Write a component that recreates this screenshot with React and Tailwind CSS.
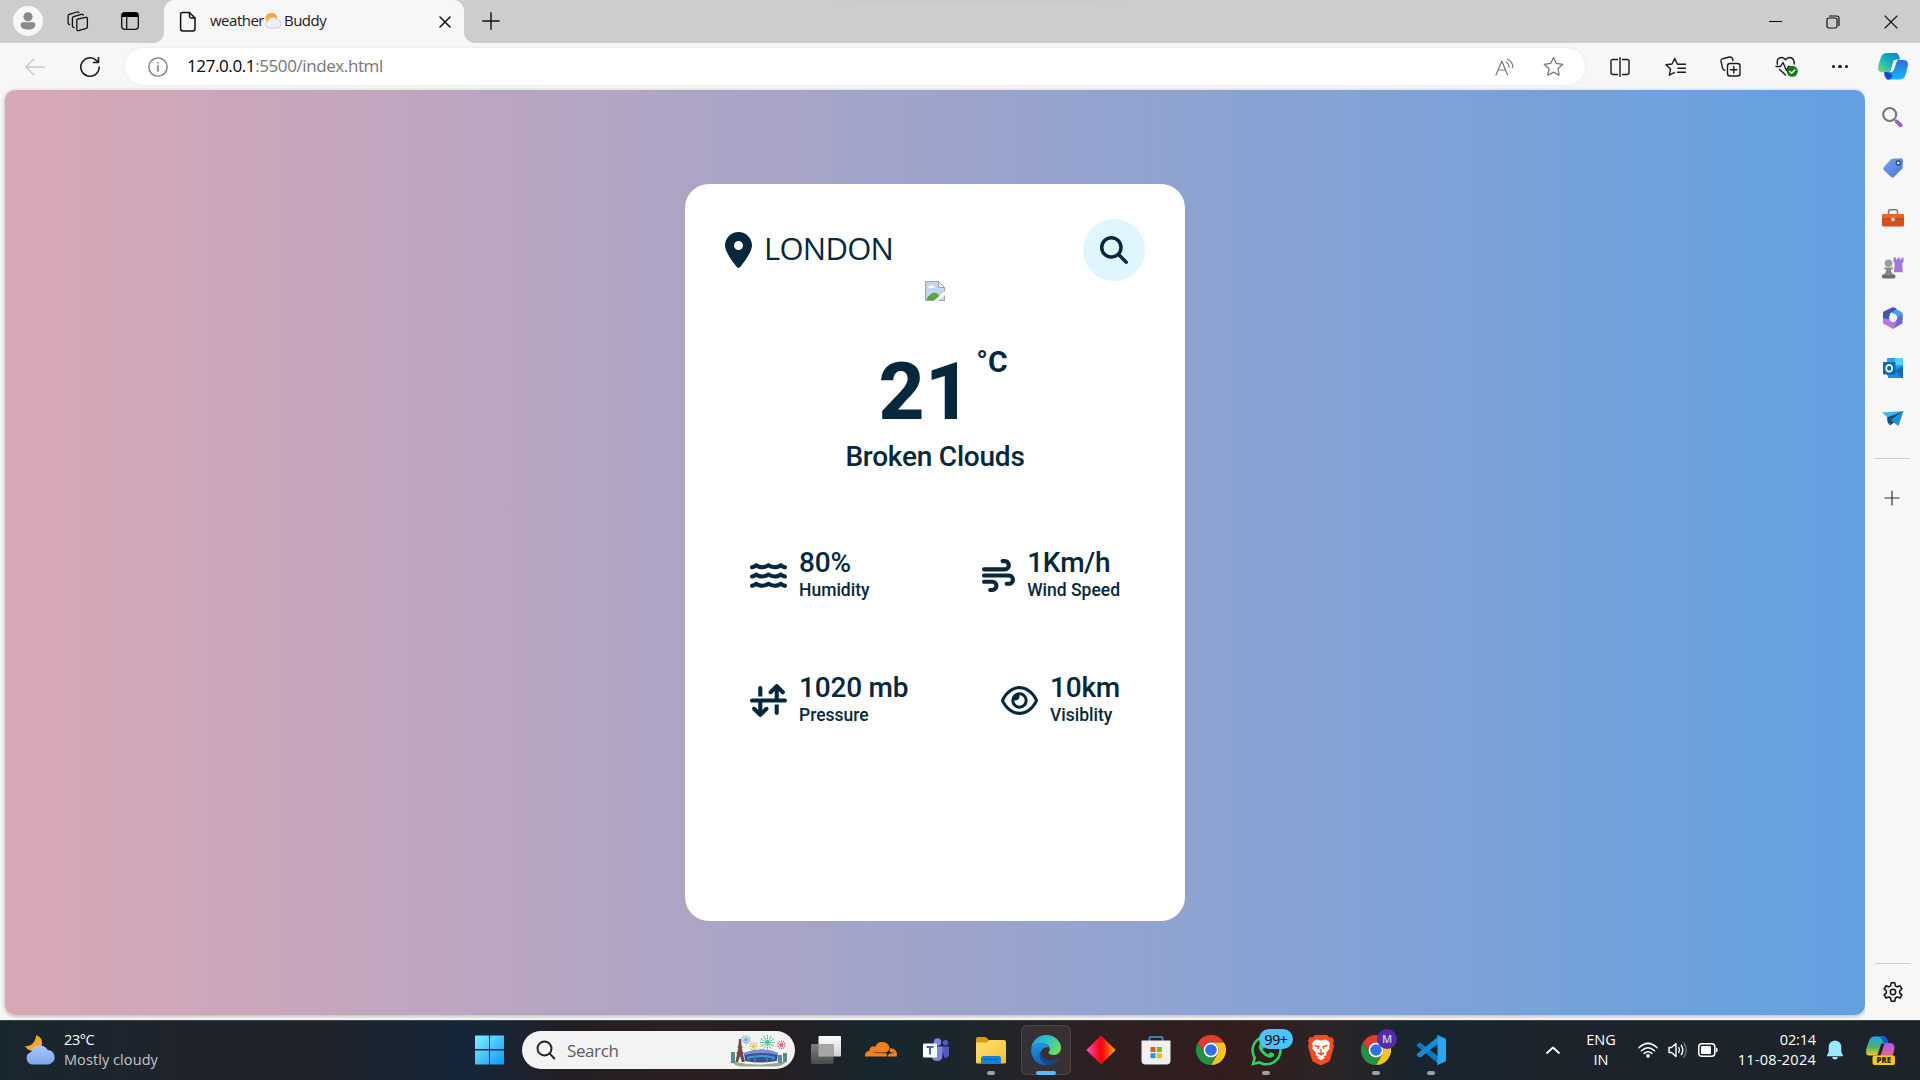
import React from "react";
import {
  FaLocationDot,
  FaMagnifyingGlass,
  FaWater,
  FaWind,
  FaArrowDownUpAcrossLine,
  FaRegEye,
  FaWhatsapp,
  FaCloudflare,
} from "react-icons/fa6";

const UI = "font-['Open_Sans','Noto_Sans',sans-serif]";

const stroke = { fill: "none", stroke: "currentColor", strokeLinecap: "round", strokeLinejoin: "round" };

/* ---------- Title bar ---------- */

function Profile() {
  return (
    <div className="h-[30px] w-[30px] rounded-full bg-[#f7f7f7]">
      <svg viewBox="0 0 30 30" className="h-[30px] w-[30px]" fill="#8a8a8a">
        <circle cx="15" cy="10.8" r="4.6" />
        <path d="M10 16.2h10a2.4 2.4 0 0 1 2.4 2.4c0 3.6-3.4 5.2-7.4 5.2s-7.4-1.600-7.400-5.200a2.400 2.400 0 0 1 2.400-2.400z" />
      </svg>
    </div>
  );
}

function Workspaces() {
  return (
    <svg viewBox="0 0 22 22" className="h-[22px] w-[22px]" {...stroke} strokeWidth="1.300">
      <path d="M10.500 9.200l8.200-1.900q1.700-.3 1.700 1.300v8.200q0 1.200-1.200 1.600l-7.600 2.200q-1.800.4-1.800-1.300v-8.500q0-1.300.7-1.600z" />
      <path d="M7 17.500q-1.600 0-1.600-1.500V8.200q0-1.200 1.200-1.600l7.800-2.300q1.500-.4 1.800.8" />
      <path d="M2.600 14.500q-1.500-.2-1.500-1.600V6q0-1.200 1.200-1.600L10 2q1.500-.5 1.900.6" />
    </svg>
  );
}

function TabActions() {
  return (
    <svg viewBox="0 0 20 20" className="h-5 w-5">
      <rect x="1.700" y="1.700" width="16.600" height="16.600" rx="2.800" fill="none" stroke="#111" strokeWidth="1.300" />
      <path d="M1.700 6V4.300q0-2.600 2.600-2.600h11.400q2.600 0 2.600 2.600V6z" fill="#000" />
      <path d="M6.700 6v12" stroke="#111" strokeWidth="1.300" />
    </svg>
  );
}

function PartlyCloudy() {
  return (
    <svg viewBox="0 0 17 17" className="ml-px h-[17px] w-[17px]">
      <circle cx="6.500" cy="6.800" r="5.800" fill="#fdb52f" />
      <path d="M.5 6l1-3.500L5 1 9 1l3 2.500.5 2.500-4-1.500z" fill="#f79a3a" opacity=".6" />
      <path d="M4 16a3.700 3.700 0 0 1-1-7.200A5.200 5.200 0 0 1 12.200 7.500a4.300 4.300 0 0 1 .4 8.500z" fill="#f1ecfa" stroke="#c9bfdb" strokeWidth=".8" />
    </svg>
  );
}

function TitleBar() {
  return (
    <header className="flex h-[43px] bg-[#cdcdcd] text-[#111]">
      <div className="flex w-[164px] items-center pb-px pl-[13px]">
        <Profile />
        <div className="ml-[24px]"><Workspaces /></div>
        <div className="ml-[31px]"><TabActions /></div>
      </div>
      <div className="relative flex w-[300px] items-center rounded-t-[11px] bg-[#f7f7f7] pl-[15px] pr-[12px]">
        <span className="absolute -left-[10px] bottom-0 h-[10px] w-[10px] bg-[radial-gradient(circle_at_0_0,#cdcdcd_9.500px,#f7f7f7_10px)]" />
        <span className="absolute -right-[10px] bottom-0 h-[10px] w-[10px] bg-[radial-gradient(circle_at_100%_0,#cdcdcd_9.500px,#f7f7f7_10px)]" />
        <svg viewBox="0 0 18 22" className="h-[22px] w-[18px]" {...stroke} strokeWidth="1.500">
          <path d="M3.500 1.500h7l5.500 5.500v10.800q0 2.200-2.200 2.200H3.800q-2.200 0-2.200-2.200V3.500q0-2 1.900-2z" />
          <path d="M10.500 1.800v3.500q0 1.700 1.700 1.700h3.600" />
        </svg>
        <div className={`${UI} ml-[13px] flex items-center pb-[2px] text-[15px] tracking-[-0.5px] text-[#1a1a1a]`}>
          <span>weather</span>
          <PartlyCloudy />
          <span className="ml-[2px]">Buddy</span>
        </div>
        <svg viewBox="0 0 12 12" className="ml-auto mr-px h-3 w-3" {...stroke} strokeWidth="1.500">
          <path d="M1 1l10 10M11 1L1 11" />
        </svg>
      </div>
      <svg viewBox="0 0 18 18" className="ml-[18px] mt-[12px] h-[18px] w-[18px]" {...stroke} strokeWidth="1.400">
        <path d="M9 .8v16.400M.8 9h16.400" />
      </svg>
      <div className="ml-[333px] h-[3px] w-[290px] rounded-[50%] bg-[#c7c7c7] blur-[1.500px]" />
      <div className="ml-auto flex items-center pr-[22px]">
        <div className="h-[1px] w-[13px] bg-black" />
        <svg viewBox="0 0 14 14" className="ml-[44px] h-[14px] w-[14px]" {...stroke} strokeWidth="1.200">
          <rect x="1" y="3" width="10" height="10" rx="1.800" />
          <path d="M3.500 1h7q2.500 0 2.500 2.500v7" />
        </svg>
        <svg viewBox="0 0 14 14" className="ml-[44px] h-[14px] w-[14px]" {...stroke} strokeWidth="1.100">
          <path d="M1 1l12 12M13 1L1 13" />
        </svg>
      </div>
    </header>
  );
}

/* ---------- Toolbar ---------- */

const STAR = "M10 1.500l2.700 5.600 6.100.8-4.500 4.300 1.100 6.100L10 15.400l-5.400 2.900 1.100-6.100L1.200 7.900l6.100-.8z";

function CopilotEdge() {
  return (
    <svg viewBox="0 0 30 27" className="h-[27px] w-[30px]">
      <defs>
        <linearGradient id="ceA" x1="0" y1="1" x2="1" y2="0">
          <stop offset="0" stopColor="#7be06c" />
          <stop offset=".45" stopColor="#1bb6b9" />
          <stop offset="1" stopColor="#0a7fd6" />
        </linearGradient>
        <linearGradient id="ceB" x1="0" y1="0" x2="0" y2="1">
          <stop offset="0" stopColor="#2b6fe6" />
          <stop offset="1" stopColor="#14b8f5" />
        </linearGradient>
      </defs>
      <path d="M9 26.500q-1.500-1-2.700-4L6 18h6l5-11h8q5 0 5 4 0 2.500-1.500 7L27.500 22q-1.600 4.500-6 4.500z" fill="url(#ceB)" />
      <path d="M6.300 19h5.500l2.800 4-2.600 3.500H9.500q-2.500-1.500-3.200-7.500z" fill="#174ad0" />
      <path d="M9 0h9.500q2.500.8 3.500 6.500h-3.500q-2 0-2.700 2L13 16.500q-.9 2.600-3.500 2.600H4Q0 19 0 15.500 0 13 1.500 8.500L3 4q1.500-4 6-4z" fill="url(#ceA)" />
      <path d="M15.500 7.500q1.500-.8 4.500-.5-1 .5-1.600 2.500l-2.200 6.500q-1 3-4 3.200H9.800q2.400 0 3.200-2.500z" fill="#fff" />
    </svg>
  );
}

function Toolbar() {
  return (
    <div className="flex h-[47px] items-center bg-[#f7f7f7] text-[#1b1b1b]">
      <svg viewBox="0 0 20 18" className="ml-[25px] h-[18px] w-5 text-[#c9c9c9]" {...stroke} strokeWidth="1.300">
        <path d="M9 1L1 9l8 8M1 9h18.500" />
      </svg>
      <svg viewBox="0 0 22 22" className="ml-[34px] h-[22px] w-[22px]" {...stroke} strokeWidth="1.600">
        <path d="M20.200 11A9.200 9.200 0 1 1 17.300 4.300L19.300 6.200" />
        <path d="M19.500 1.500v5h-5" />
      </svg>
      <div className="ml-[24px] flex h-[37px] w-[1460px] items-center rounded-full bg-white pl-[22px] pr-[21px] shadow-[0_0_4px_rgba(0,0,0,0.06)]">
        <svg viewBox="0 0 20 20" className="ml-px h-5 w-5 text-[#767676]" {...stroke} strokeWidth="1.300">
          <circle cx="10" cy="10" r="9.200" />
          <path d="M10 8.800v5.400M10 5.700v.4" strokeWidth="1.500" />
        </svg>
        <div className={`${UI} ml-[19px] pb-px text-[17px] tracking-[-0.4px] text-[#767676]`}>
          <span className="text-black">127.0.0.1</span>:5500/index.html
        </div>
        <svg viewBox="0 0 19 18" className="ml-auto h-[18px] w-[19px] text-[#767676]" {...stroke} strokeWidth="1.200">
          <path d="M1 17L6.800 3l5.800 14M3 12h7.600" />
          <path d="M11.500 4.200a6 6 0 0 1 2.700 4.800M12.500 1.200a9 9 0 0 1 5.300 8.300" />
        </svg>
        <svg viewBox="0 0 20 20" className="ml-[29px] h-[21px] w-[21px] text-[#767676]" {...stroke} strokeWidth="1.200">
          <path d={STAR} />
        </svg>
      </div>
      <svg viewBox="0 0 20 20" className="ml-[24.500px] h-5 w-5" {...stroke} strokeWidth="1.400">
        <path d="M7.500 2.500H3q-2 0-2 2v11q0 2 2 2h4.500M12.500 2.500H17q2 0 2 2v11q0 2-2 2h-4.500M10 .5v19" />
      </svg>
      <svg viewBox="0 0 21 20" className="ml-[35px] h-5 w-[21px]" {...stroke} strokeWidth="1.400">
        <path d="M12.500 7h-.2L9.800 1.500 7 7l-6 .8 4.500 4.300-1.200 6 5-2.500M12.500 7.200h8M13 11.200h7.500M12.500 15.200h8" />
      </svg>
      <svg viewBox="0 0 21 21" className="ml-[34px] h-[21px] w-[21px]" {...stroke} strokeWidth="1.400">
        <rect x="7.500" y="7.500" width="12.500" height="12.500" rx="2.500" />
        <path d="M13.800 10.500v6.500M10.500 13.800H17M4.800 14.200q-1.700-.2-2.200-2L1 5.400Q.6 3.400 2.600 2.800l7-1.800q2-.4 2.800 1.500l.6 2" />
      </svg>
      <svg viewBox="0 0 23 21" className="ml-[34px] h-[21px] w-[23px]" {...stroke} strokeWidth="1.400">
        <path d="M2.300 8.200Q1.500 2 6.300 1.500q2.700-.1 4.200 2.300 1.500-2.400 4.200-2.300 4.800.5 4.500 6.500M1 10.500h4.500L8 6.500l3.500 8 2-4h1.500M4.500 13.500l6 5.500" />
        <circle cx="17.300" cy="15.300" r="5.500" fill="#107c10" stroke="none" />
        <path d="M14.800 15.500l1.800 1.700 3.200-3.300" stroke="#fff" strokeWidth="1.500" />
      </svg>
      <div className="ml-[34px] flex gap-[3px]">
        <span className="h-[3.500px] w-[3.500px] rounded-full bg-[#111]" />
        <span className="h-[3.500px] w-[3.500px] rounded-full bg-[#111]" />
        <span className="h-[3.500px] w-[3.500px] rounded-full bg-[#111]" />
      </div>
      <div className="ml-[29.500px] pb-px"><CopilotEdge /></div>
    </div>
  );
}

/* ---------- Sidebar ---------- */

function Sidebar() {
  const cls = "h-[22px] w-[22px]";
  return (
    <aside className="flex w-[55px] flex-col items-center bg-[#f7f7f7]">
      <div className="mt-[16px] flex flex-col items-center gap-[28px]">
        <svg viewBox="0 0 22 22" className="mb-px mr-px h-[22px] w-[22px]">
          <circle cx="8.700" cy="8.500" r="6.500" fill="none" stroke="#767676" strokeWidth="2.100" />
          <path d="M14 14l1.500 1.500" stroke="#767676" strokeWidth="2" />
          <path d="M15.800 15.600l3.800 3.600" stroke="#9a62d0" strokeWidth="4" strokeLinecap="round" />
        </svg>
        <svg viewBox="0 0 22 22" className={cls}>
          <defs>
            <linearGradient id="tag" x1="0" y1="0" x2="1" y2="1">
              <stop offset="0" stopColor="#73a5ec" />
              <stop offset="1" stopColor="#4a74d4" />
            </linearGradient>
          </defs>
          <path d="M10.500 1.800l8.500-.6q2 0 2 2l-.3 7q0 1-.8 1.700l-8 8q-1.400 1.200-2.800 0L1.700 13q-1.200-1.400 0-2.800l7.200-7.700q.7-.6 1.600-.7z" fill="url(#tag)" />
          <circle cx="16.200" cy="6" r="2" fill="#fff" stroke="#27488f" strokeWidth="1.300" />
        </svg>
        <svg viewBox="0 -1 22 22" className={cls}>
          <path d="M6.500 6V3.500q0-1.700 1.700-1.700h5.600q1.700 0 1.700 1.700V6" fill="none" stroke="#777" strokeWidth="1.500" />
          <rect x="0" y="6" width="22" height="12.500" rx="1.500" fill="#d4501e" />
          <path d="M0 11V7.500Q0 6 1.500 6h19Q22 6 22 7.500V11z" fill="#e8622a" />
          <path d="M0 10.800h22" stroke="#b23d12" strokeWidth=".8" />
          <circle cx="11" cy="11.500" r="2" fill="#d6d6d6" />
        </svg>
        <svg viewBox="0 -.5 23 23" className="h-[22px] w-[23px]">
          <path d="M13 0h2v1.800h2V0h2v1.800h2V0h2v4.500l-1.500 1.500.8 9.500H13l.8-9.500L12.500 4.500V0z" fill="#a377dd" />
          <circle cx="7.300" cy="6" r="4" fill="#9c9c9c" />
          <path d="M3 10.500h9v1.700H9.800q0 3 2 5H3q2-2 2-5H3z" fill="#858585" />
          <rect x="0.500" y="17.500" width="14" height="4.500" rx="1.800" fill="#6d6d6d" />
        </svg>
        <svg viewBox="0 0 22 22" className={cls}>
          <path d="M11 .3l8.500 4.700q1 .6 1 1.600v6.500l-5-2q-1-4-4.500-4.500L7 3z" fill="#4aa2ea" />
          <path d="M20.500 6.500V15.500q0 1-1 1.500L12 21.300q-1 .5-2 0L6 18.500q6-1 9-7z" fill="#6f63cf" />
          <path d="M10 .4Q11 0 12 .4L15 2 8 6.500V14l-6.200 2.500Q1 16 1 15V6q0-1 .8-1.400z" fill="#4456b5" />
          <path d="M1 11l7 1.500q1.500 3 4.500 2.500l2.500-1-3 7.300q-1 .5-2 0L2 17q-1-.6-1-1.500z" fill="#b17be0" />
          <circle cx="11" cy="10.800" r="3.900" fill="#f7f7f7" />
        </svg>
        <svg viewBox="0 0 22 22" className={cls}>
          <rect x="5" y="1" width="16" height="18" rx="1" fill="#28a8ea" />
          <path d="M13 1h8v7h-8z" fill="#50d9ff" />
          <path d="M6 13l15-4v11q0 1-1 1H7q-1 0-1-1z" fill="#1490df" />
          <path d="M13 14l8-4.500V20q0 1-1 1z" fill="#0f6cbd" />
          <rect x="1" y="5" width="12.500" height="12.500" rx="1" fill="#0a66c2" />
          <ellipse cx="7.200" cy="11.300" rx="3" ry="3.400" fill="none" stroke="#fff" strokeWidth="1.800" />
        </svg>
        <svg viewBox="0 -1 22 22" className={cls}>
          <path d="M0 4.500L21.500 3 8 12z" fill="#3fb4ee" />
          <path d="M21.500 3L16.500 18 9 12.500z" fill="#1d8fdc" />
          <path d="M5 9.500L21.500 3 9.500 12 8 17.500 5.500 14z" fill="#12507f" />
          <path d="M8 17.500l1.500-5 2.500 2z" fill="#0b3a66" />
        </svg>
      </div>
      <div className="mt-[29px] h-px w-[35px] bg-[#cfcfcf]" />
      <svg viewBox="0 0 16 16" className="mr-px mt-[31px] h-4 w-4 text-[#333]" {...stroke} strokeWidth="1.200">
        <path d="M8 1v14M1 8h14" />
      </svg>
      <div className="mt-auto h-px w-[35px] bg-[#cfcfcf]" />
      <svg viewBox="0 0 22 22" className="mb-[17px] mt-[17px] h-[22px] w-[22px] text-[#111]" {...stroke} strokeWidth="1.500">
        <path d="M9.200 1h3.600l.6 3 1.700 1 2.900-1 1.900 3.200-2.300 2v1.900l2.300 2-1.900 3.100-2.900-1-1.700 1-.6 3.300H9.200l-.6-3.300-1.700-1-2.900 1L2.100 13.100l2.300-2V9.200L2.100 7.200 4 4l2.900 1 1.700-1z" transform="translate(0 .8)" />
        <circle cx="11" cy="11" r="2.700" />
      </svg>
    </aside>
  );
}

/* ---------- Weather card ---------- */

function BrokenImage() {
  return (
    <svg viewBox="0 0 20 20" className="h-5 w-5">
      <path d="M.5.5h13L19.500 6.500v13H.5z" fill="#c3d5f5" stroke="#a3a3a3" />
      <path d="M13.500.5v6h6z" fill="#fff" stroke="#a3a3a3" />
      <path d="M3 7q0-1.500 1.500-1.500Q5 4 6.500 4 8 4 8.500 5.500 10 5.500 10 7z" fill="#fff" />
      <path d="M1.500 19q1-4 4.500-6 3.500-2.500 7 0 2 2 3 6z" fill="#56a838" />
      <path d="M8.500 20L20 10v4l-6.500 6z" fill="#fff" />
    </svg>
  );
}

function Stat({ icon, value, label }) {
  return (
    <div className="flex items-center">
      <div className="pt-[3px]">{icon}</div>
      <div className="ml-[12px]">
        <div className="text-[28px] leading-[32px] tracking-[-0.2px]">{value}</div>
        <div className="text-[17.500px] leading-[22px]">{label}</div>
      </div>
    </div>
  );
}

function WeatherCard() {
  return (
    <section className="flex h-[737px] w-[500px] flex-col rounded-[24px] bg-white px-10 pt-[35px] font-[Roboto,sans-serif] font-medium text-[#06283d]">
      <div className="flex h-[62px] items-center">
        <FaLocationDot className="h-9 w-[27px]" />
        <span className={`${UI} ml-[12px] pb-[4px] text-[31px] font-normal tracking-[-0.75px]`}>LONDON</span>
        <button className="ml-auto flex h-[62px] w-[62px] items-center justify-center rounded-full bg-[#dff6ff]">
          <FaMagnifyingGlass className="h-7 w-7" />
        </button>
      </div>
      <div className="flex justify-center"><BrokenImage /></div>
      <div className="mt-[41px] flex h-[100px] justify-center pl-[16px]">
        <span className="text-[80px] font-extrabold leading-[101px] tracking-[0.5px]">21</span>
        <span className="ml-[4.500px] text-[30px] font-bold leading-[40px]">°C</span>
      </div>
      <div className="-mt-[3px] text-center text-[28px] leading-[36px] tracking-[-0.22px]">Broken Clouds</div>
      <div className="mt-[72px] flex flex-col gap-[71px] px-[25px]">
        <div className="flex justify-between">
          <Stat icon={<FaWater className="h-[33px] w-[37px]" />} value="80%" label="Humidity" />
          <Stat icon={<FaWind className="h-[33px] w-[33px]" />} value="1Km/h" label="Wind Speed" />
        </div>
        <div className="flex justify-between">
          <Stat icon={<FaArrowDownUpAcrossLine className="h-[33px] w-[37px]" />} value="1020 mb" label="Pressure" />
          <Stat icon={<FaRegEye className="h-[33px] w-[37px]" />} value="10km" label="Visiblity" />
        </div>
      </div>
    </section>
  );
}

/* ---------- Taskbar ---------- */

function Chrome() {
  const arm = "M24 12H44.800A24 24 0 0 0 3.200 12L13.600 30A12 12 0 0 1 24 12z";
  return (
    <svg viewBox="0 0 48 48" className="h-[30px] w-[30px]">
      <path d={arm} fill="#e33b2e" />
      <path d={arm} fill="#fcc31e" transform="rotate(120 24 24)" />
      <path d={arm} fill="#229342" transform="rotate(240 24 24)" />
      <circle cx="24" cy="24" r="12" fill="#fff" />
      <circle cx="24" cy="24" r="9.300" fill="#2f6fe8" />
    </svg>
  );
}

function StadiumArt() {
  const bursts = [
    [16, 7, 5, "#6aa7cc"],
    [23.500, 13.500, 4.500, "#f0bd5a"],
    [37.500, 9.500, 7.500, "#38b37c"],
    [51.500, 12, 4.500, "#e4577d"],
  ];
  return (
    <svg viewBox="0 0 58 34" className="h-[34px] w-[58px]">
      {bursts.map(([x, y, r, c]) => (
        <g key={c} stroke={c} strokeWidth="1" strokeDasharray="1.600 .8">
          {[0, 30, 60, 90, 120, 150].map((a) => (
            <path key={a} d={`M${x - r} ${y}h${r * 2}`} transform={`rotate(${a} ${x} ${y})`} />
          ))}
        </g>
      ))}
      <path d="M1 28q28 7 56 0-4 5.500-13 5.500H14Q4 33.500 1 28z" fill="#97aa8e" />
      <path d="M1 19h4v11H1zM48 22h4v8h-4zM53 20h4v9h-4z" fill="#5a8a93" />
      <path d="M9 6h2l.8 9 3 14h-3l-1.800-6-2 6H5.500l2.700-14z" fill="#6d4a48" />
      <path d="M6.500 20h7M7.700 14h4.800" stroke="#6d4a48" strokeWidth="1.500" />
      <path d="M14 20q17-7 34 0l-1 8q-16 3-32 0z" fill="#34538f" />
      <path d="M14 20q17-7 34 0l-.5 2q-16-4-33 0z" fill="#7f8fcf" />
      <path d="M17 25q14-4 28 0" stroke="#2ea6cf" strokeWidth="2" fill="none" />
      <path d="M19 29v-6M25 29.500v-7M37 29.500v-7M43 29v-6" stroke="#8a65bf" strokeWidth="1.200" />
    </svg>
  );
}

const pill = "absolute bottom-0 left-1/2 h-1 w-2 -translate-x-1/2 rounded-full bg-[#a0a0a0]";

function AppSlot({ children, running, active }) {
  return (
    <div
      className={
        active
          ? "relative flex h-[50px] w-[50px] items-center justify-center rounded-[6px] border border-white/10 bg-white/[0.07]"
          : "relative flex h-[50px] w-[50px] items-center justify-center"
      }
    >
      {children}
      {running && <span className={pill} />}
      {active && <span className="absolute -bottom-px left-1/2 h-1 w-5 -translate-x-1/2 rounded-full bg-[#4cc2ff]" />}
    </div>
  );
}

function TaskApps() {
  return (
    <div className="flex gap-[5px]">
      <AppSlot>
        <svg viewBox="0 0 30 28" className="h-[28px] w-[30px]">
          <defs>
            <linearGradient id="tvA" x1="0" y1="0" x2="0" y2="1"><stop offset="0" stopColor="#fff" /><stop offset="1" stopColor="#cfcfcf" /></linearGradient>
            <linearGradient id="tvB" x1="0" y1="0" x2="0" y2="1"><stop offset="0" stopColor="#8a8a8a" /><stop offset="1" stopColor="#4f4f4f" /></linearGradient>
          </defs>
          <rect x="7.500" y="0" width="22.500" height="20.500" rx="1" fill="url(#tvA)" />
          <rect x="0" y="8" width="22.500" height="20" rx="1" fill="url(#tvB)" opacity=".9" />
          <path d="M7.500 8h15v12.500h-15z" fill="#a5a5a5" />
        </svg>
      </AppSlot>
      <AppSlot><FaCloudflare className="h-[30px] w-[32px] text-[#f38020]" /></AppSlot>
      <AppSlot>
        <svg viewBox="0 0 26 24" className="h-[24px] w-[26px]">
          <circle cx="14.500" cy="4" r="3.800" fill="#7b83eb" />
          <circle cx="22.500" cy="4.700" r="2.700" fill="#5059c9" />
          <path d="M18 8.500h8v7.500q0 3.500-4.500 4z" fill="#5059c9" />
          <path d="M9 8.500h10.500v8.500q0 6-5.500 6t-5-6z" fill="#7b83eb" />
          <rect x="0" y="5.500" width="14" height="14" rx=".8" fill="#fff" />
          <path d="M3.500 9h7M7 9v7.500" stroke="#5059c9" strokeWidth="2" />
        </svg>
      </AppSlot>
      <AppSlot running>
        <svg viewBox="0 0 30 27" className="h-[27px] w-[30px]">
          <defs><linearGradient id="fold" x1="0" y1="0" x2="1" y2="1"><stop offset="0" stopColor="#ffe17a" /><stop offset="1" stopColor="#fbbf2b" /></linearGradient></defs>
          <path d="M0 2q0-2 2-2h7q1 0 2 1l2 2.500V10H0z" fill="#dc9a0c" />
          <path d="M11 5.500L13 3h15q2 0 2 2v20q0 1.500-1.500 1.500h-27Q0 26.500 0 25V6.500q0-1 1-1z" fill="url(#fold)" />
          <path d="M5 27v-5.500Q5 19 7.500 19h15q2.500 0 2.500 2.500V27z" fill="#1383d8" />
          <path d="M8.500 22.500h13" stroke="#0b5da8" strokeWidth="1.200" />
        </svg>
      </AppSlot>
      <AppSlot active>
        <svg viewBox="0 0 30 30" className="h-[30px] w-[30px]">
          <defs>
            <linearGradient id="eA" x1="0" y1="0" x2="1" y2=".5"><stop offset="0" stopColor="#1f9ce0" /><stop offset=".5" stopColor="#2ebfd0" /><stop offset="1" stopColor="#62e060" /></linearGradient>
            <linearGradient id="eB" x1="0" y1="0" x2="0" y2="1"><stop offset="0" stopColor="#2295e3" /><stop offset="1" stopColor="#1160c0" /></linearGradient>
          </defs>
          <path d="M.2 13.500C1 6 7 0 15 0c9 0 15 6.500 15 12.700 0 4.700-3.600 7.300-7.300 7.300-3.500 0-5.200-1.200-5.200-2.200 0-.8 1.300-1.500 1.300-3.800 0-3.500-3.800-6-8-6C5.500 8 2 10 .2 13.500z" fill="url(#eA)" />
          <path d="M.1 15C.6 11 4.500 7.800 10 7.800c4 0 7.500 2 8.500 5-5-1.800-8.500 1.700-8.500 6.200 0 5 3 9 7 10.800C7 31 0 24 .1 15z" fill="url(#eB)" />
          <path d="M10 17c0 7 7.500 11 14.500 7.500q1.700-.8 3-.3Q24 29.500 17 30 10 28 8.500 22q-.5-5 4-9Q10 15 10 17z" fill="#0f4b93" />
        </svg>
      </AppSlot>
      <AppSlot>
        <svg viewBox="0 0 30 30" className="h-[30px] w-[30px]">
          <defs><linearGradient id="dia"><stop offset="0" stopColor="#ff4fc8" /><stop offset=".45" stopColor="#fb0613" /><stop offset=".55" stopColor="#fb0613" /><stop offset="1" stopColor="#ffae12" /></linearGradient></defs>
          <path d="M15 .5L29.700 15 15 29.500.3 15z" fill="url(#dia)" />
        </svg>
      </AppSlot>
      <AppSlot>
        <svg viewBox="0 0 30 30" className="h-[30px] w-[30px]">
          <path d="M8.500 7V3Q8.500 2 9.500 2h11q1 0 1 1v4" fill="none" stroke="#2aa8e8" strokeWidth="1.600" />
          <path d="M.5 5.500h29v20q0 4-4 4h-21q-4 0-4-4z" fill="#f0f0f0" />
          <path d="M9.500 12h5v5h-5z" fill="#f25022" />
          <path d="M15.800 12h5v5h-5z" fill="#7fba00" />
          <path d="M9.500 18.200h5v5h-5z" fill="#00a4ef" />
          <path d="M15.800 18.200h5v5h-5z" fill="#ffb900" />
        </svg>
      </AppSlot>
      <AppSlot><Chrome /></AppSlot>
      <AppSlot running>
        <FaWhatsapp className="h-[35px] w-[35px] text-[#2bd366]" />
        <span className={`${UI} absolute left-[18px] top-[4px] flex h-5 w-[34px] items-center justify-center rounded-full bg-[#4cc2ff] text-[14px] tracking-[-0.3px] text-black`}>99+</span>
      </AppSlot>
      <AppSlot>
        <svg viewBox="0 0 26 30" className="h-[30px] w-[26px]">
          <path d="M7 0h12l2.500 2.500 2.500-.5 2 3.500-1 2.500 1 3-3.800 13.500q-.5 1.500-2 2.500L14 30h-2l-6.200-3q-1.500-1-2-2.500L0 11l1-3-1-2.500L2 2l2.500.5z" fill="#fb4a1c" />
          <path d="M9 4.500l4 1 4-1 3.500 1.500 1.700 3-1.200 2 .7 2.500-3.700 4.500.5 2-3 1.500 1.500 1-4 3-4-3 1.500-1-3-1.500.5-2L4.300 13.500 5 11 3.800 9l1.700-3z" fill="#fff" />
          <path d="M6.500 10.500l4.200 1-.7 2.500M19.500 10.500l-4.200 1 .7 2.500M10 18l3 1.500 3-1.500M13 14v5" fill="none" stroke="#fb4a1c" strokeWidth="1.400" />
        </svg>
      </AppSlot>
      <AppSlot running>
        <Chrome />
        <span className={`${UI} absolute left-[26px] top-[4px] flex h-5 w-5 items-center justify-center rounded-full bg-[#512da8] text-[11px] font-semibold text-[#d9cdf2]`}>M</span>
      </AppSlot>
      <AppSlot running>
        <svg viewBox="0 0 30 30" className="h-[30px] w-[30px]">
          <path d="M1 9.500l2-1.700q1-.6 2 .2L23 22v7.300L.9 11q-.6-.8.1-1.500z" fill="#1177bd" />
          <path d="M1 20.500l2 1.700q1 .6 2-.2L23 8V.7L.9 19q-.6.800.1 1.500z" fill="#1a8ad4" />
          <path d="M21.500 0L29 3.300q1 .5 1 1.700v20q0 1.200-1 1.700L21.500 30q-1.500-.5 0-1.500V1.500q-1-1.300 0-1.500z" fill="#2aa5f0" />
        </svg>
      </AppSlot>
    </div>
  );
}

function Taskbar() {
  return (
    <footer className={`${UI} flex h-[60px] items-center border-t border-[#3a4348] bg-[linear-gradient(90deg,#18272f_0px,#20232c_200px,#1f232c_330px,#14263a_470px,#231f25_570px,#2d1f20_690px,#251f22_780px,#17262d_870px,#1c262c_970px,#2d2022_1080px,#331d1d_1240px,#2a2526_1330px,#18252e_1420px,#1c232b_1560px,#1c232b_1920px)] pb-px text-white`}>
      <div className="flex w-[474px] items-center pl-[25px]">
        <svg viewBox="0 0 30 30" className="h-[30px] w-[30px]">
          <defs><linearGradient id="cl" x1="0" y1="0" x2="0" y2="1"><stop offset="0" stopColor="#a9c9f8" /><stop offset="1" stopColor="#7ba5ec" /></linearGradient></defs>
          <path d="M11.500 0Q18 3 17 9.500 15 16 8 16 2 15.500 0 11q9 1.500 11.500-11z" fill="#f4a62a" />
          <path d="M6.500 29.500a6.500 6.500 0 0 1-.3-12.500 9 9 0 0 1 16.500-2 7.300 7.300 0 0 1 .8 14.500z" fill="url(#cl)" />
        </svg>
        <div className="ml-[9px] pb-px text-[14.500px] leading-5">
          <div className="tracking-[-0.4px]">23°C</div>
          <div className="tracking-[0.08px] text-[#c3c6c9]">Mostly cloudy</div>
        </div>
      </div>
      <svg viewBox="0 0 30 30" className="h-[30px] w-[30px]">
        <defs><linearGradient id="win" x1="0" y1="0" x2="1" y2="1"><stop offset="0" stopColor="#7df3ff" /><stop offset="1" stopColor="#0d97fb" /></linearGradient></defs>
        <path d="M1.500 .5h13.500V14H1V1zM16 .5H29.500l.5.5v13h-14zM1 15.500h14v14H1.500l-.5-.5zM16 15.500h14V29l-.5.500H16z" fill="url(#win)" />
      </svg>
      <div className="ml-[18px] mr-[6px] flex h-[38px] w-[273px] items-center rounded-full bg-[#f3f3f3] pl-[14px] pr-[7px] text-[#5c5c5c]">
        <svg viewBox="0 0 20 20" className="h-5 w-5 text-[#222]" {...stroke} strokeWidth="1.900">
          <circle cx="8.500" cy="8.500" r="7" />
          <path d="M13.700 13.700L18.300 18.500" />
        </svg>
        <span className="ml-[11px] pt-px text-[17px] tracking-[-0.4px]">Search</span>
        <div className="ml-auto"><StadiumArt /></div>
      </div>
      <TaskApps />
      <div className="ml-auto flex items-center pr-[25px]">
        <svg viewBox="0 0 14 8" className="h-2 w-[14px]" {...stroke} strokeWidth="1.700"><path d="M1 7l6-5.500L13 7" /></svg>
        <div className="ml-[24px] w-[34px] pb-px text-center text-[14.500px] leading-5">
          <div>ENG</div>
          <div>IN</div>
        </div>
        <svg viewBox="0 0 20 16" className="ml-[20px] h-4 w-5" {...stroke} strokeWidth="1.500">
          <path d="M1 5.800q9-8.800 18 0M3.500 8.700q6.500-6 13 0M6.200 11.400q3.800-3.300 7.600 0" />
          <circle cx="10" cy="13.800" r="1.100" fill="#fff" />
        </svg>
        <svg viewBox="0 0 20 18" className="ml-[10px] h-[18px] w-5" {...stroke} strokeWidth="1.400">
          <path d="M1 6.500h2.500L8 2.500v13L3.500 11.500H1z" />
          <path d="M10.800 6.500q1.500 2.500 0 5M13.300 4.300q3 4.700 0 9.400" />
          <path d="M16 2q4.500 7 0 14" stroke="#6c7277" />
        </svg>
        <svg viewBox="0 0 20 14" className="ml-[10px] h-[14px] w-5">
          <rect x=".8" y=".8" width="16" height="12.400" rx="3" fill="none" stroke="#fff" strokeWidth="1.500" />
          <rect x="3" y="3" width="10" height="8" rx="1" fill="#fff" />
          <path d="M17.800 4.500q2 .3 2 2.500t-2 2.500z" fill="#fff" />
        </svg>
        <div className="ml-[16px] flex w-[82px] flex-col items-end pb-px text-[14.500px] leading-5">
          <div className="tracking-[-0.15px]">02:14</div>
          <div className="whitespace-nowrap tracking-[0.25px]">11-08-2024</div>
        </div>
        <svg viewBox="0 0 16 20" className="ml-[11px] h-5 w-4" fill="#9be9ff">
          <path d="M8 .5q6.300.5 6.300 7v4.500l1.700 3.500v.8H0v-.8L1.700 12V7.500q0-6.500 6.300-7zM5 17h6q-.7 2.500-3 2.500T5 17z" />
        </svg>
        <svg viewBox="0 0 29 29" className="ml-[23px] h-[29px] w-[29px]">
          <defs>
            <linearGradient id="cpA" x1="0" y1="0" x2="0" y2="1"><stop offset="0" stopColor="#22a6ef" /><stop offset=".55" stopColor="#47b26b" /><stop offset="1" stopColor="#f1cb2a" /></linearGradient>
            <linearGradient id="cpB" x1="0" y1="0" x2="0" y2="1"><stop offset="0" stopColor="#a85cf2" /><stop offset="1" stopColor="#f0608c" /></linearGradient>
          </defs>
          <path d="M16 7h7.500q5 0 5 4.500 0 2-2 8.500H12z" fill="url(#cpB)" />
          <path d="M8.500.5H18q3 .5 4 6.500h-4q-2 0-2.500 2L12 19.500H3q-3 0-3-4 0-3 3-10.500Q4.500.5 8.500.5z" fill="url(#cpA)" />
          <path d="M14 .5h4q3 .5 4 6.500h-4z" fill="#1c55d8" />
          <path d="M15.500 7.500h3L14.500 19.500h-3.300z" fill="#1c232b" />
          <rect x="6.500" y="19.500" width="22.500" height="9.500" rx="2" fill="#ffc815" />
          <text x="17.800" y="27.100" textAnchor="middle" fontSize="7.800" fontWeight="800" fontFamily="Open Sans, sans-serif" fill="#222">PRE</text>
        </svg>
      </div>
    </footer>
  );
}

export default function App() {
  return (
    <div className="flex h-[1080px] w-[1920px] flex-col overflow-hidden bg-[#f7f7f7]">
      <TitleBar />
      <Toolbar />
      <div className="flex min-h-0 flex-1">
        <main className="mb-[5px] ml-[5px] flex w-[1860px] justify-center rounded-[10px] bg-[linear-gradient(90deg,#d9a7b5,#62a0e1)] pt-[94px] shadow-[0_1px_4px_rgba(0,0,0,0.3)]">
          <WeatherCard />
        </main>
        <Sidebar />
      </div>
      <Taskbar />
    </div>
  );
}
